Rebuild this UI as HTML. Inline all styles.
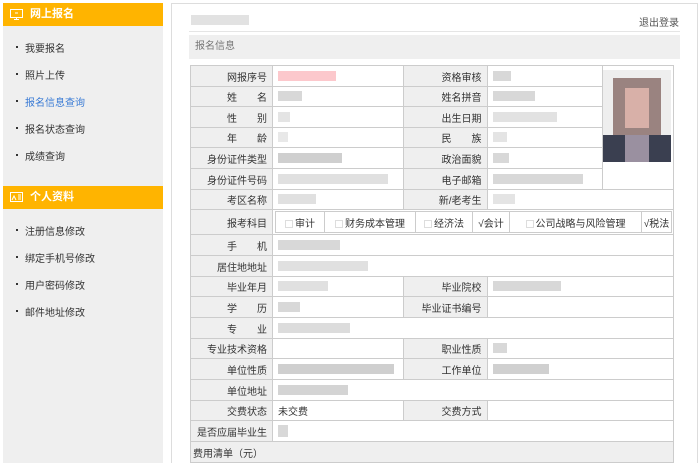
<!DOCTYPE html>
<html style="overflow:hidden;height:463px"><head><meta charset="utf-8"><style>
*{margin:0;padding:0;box-sizing:border-box}
body{width:700px;height:463px;background:#fff;font-family:"Liberation Sans","Noto Sans CJK SC",sans-serif;font-size:10px;color:#333;position:relative;overflow:hidden}
.side{position:absolute;left:3px;top:3px;width:160px;height:460px;background:#efefef}
.hd{position:absolute;left:0;width:160px;height:23px;background:#ffb400;color:#fff;font-size:11px;font-weight:bold;line-height:23px;padding-left:27px}
.hd svg{position:absolute;left:7px;top:6px}
.it{position:absolute;left:22px;font-size:10px;color:#333}
.it:before{content:"";position:absolute;left:-9px;top:6px;width:2px;height:2px;background:#333}
.main{position:absolute;left:171px;top:3px;width:527px;height:460px;border:1px solid #ddd;border-bottom:none}
table{position:absolute;left:190px;top:65px;border-collapse:collapse;table-layout:fixed}
td{border:1px solid #ccc;padding:0 5px;font-size:10px;white-space:nowrap;position:relative;overflow:hidden}
td.l{background:#efefef;text-align:right}
.b{display:inline-block;height:10px;background:#d8d8d8;vertical-align:middle}
.sub{border-collapse:collapse;position:static;table-layout:fixed;width:396px}
.sub td{border:1px solid #ccc;height:21px;padding:0;text-align:center}
.cb{display:inline-block;width:8px;height:8px;border:1px solid #ddd;vertical-align:middle;margin-right:2px}
</style></head><body>
<div class="side">
 <div class="hd" style="top:0"><svg width="13" height="11" viewBox="0 0 13 11" fill="none" stroke="#fff"><rect x="0.5" y="0.5" width="12" height="8"/><path d="M6.5 9v2M4 10.5h5M5 4h3"/></svg>网上报名</div>
 <div class="it" style="top:37px">我要报名</div>
 <div class="it" style="top:64px">照片上传</div>
 <div class="it" style="top:91px;color:#3a7bd5">报名信息查询</div>
 <div class="it" style="top:118px">报名状态查询</div>
 <div class="it" style="top:145px">成绩查询</div>
 <div class="hd" style="top:183px"><svg width="13" height="10" viewBox="0 0 13 10" fill="none" stroke="#fff"><rect x="0.5" y="0.5" width="12" height="9"/><path d="M2 8l2-4 2 4M8 3h3M8 5h3M8 7h3"/></svg>个人资料</div>
 <div class="it" style="top:220px">注册信息修改</div>
 <div class="it" style="top:247px">绑定手机号修改</div>
 <div class="it" style="top:274px">用户密码修改</div>
 <div class="it" style="top:301px">邮件地址修改</div>
</div>
<div class="main"></div>
<div style="position:absolute;left:191px;top:15px;width:58px;height:10px;background:#e2e2e2"></div>
<div style="position:absolute;left:639px;top:14px;font-size:10px;color:#555">退出登录</div>
<div style="position:absolute;left:189px;top:31px;width:491px;height:1px;background:#e5e5e5"></div>
<div style="position:absolute;left:189px;top:35px;width:491px;height:24px;background:#efefef;color:#777;line-height:24px;padding-left:6px">报名信息</div>
<div style="position:absolute;left:603px;top:70px;width:68px;height:92px;background:#eee">
 <div style="position:absolute;left:10px;top:8px;width:48px;height:60px;background:#9a8380"></div>
 <div style="position:absolute;left:22px;top:18px;width:24px;height:40px;background:#d8b0a8"></div>
 <div style="position:absolute;left:0;top:65px;width:68px;height:27px;background:#3a3f50"></div>
 <div style="position:absolute;left:22px;top:65px;width:24px;height:27px;background:#9a90a0"></div>
</div>
<table>
<colgroup><col style="width:82px"><col style="width:131px"><col style="width:83px"><col style="width:115px"><col style="width:71px"></colgroup>
<tr style="height:21px"><td class="l">网报序号</td><td><span class="b" style="width:58px;background:#fcc8cc"></span></td><td class="l">资格审核</td><td><span class="b" style="width:18px"></span></td><td rowspan="6" style="border-bottom:1px solid #ccc"></td></tr>
<tr style="height:20px"><td class="l">姓&emsp;&emsp;名</td><td><span class="b" style="width:24px"></span></td><td class="l">姓名拼音</td><td><span class="b" style="width:42px"></span></td></tr>
<tr style="height:21px"><td class="l">性&emsp;&emsp;别</td><td><span class="b" style="width:12px;background:#e4e4e4"></span></td><td class="l">出生日期</td><td><span class="b" style="width:64px;background:#e2e2e2"></span></td></tr>
<tr style="height:20px"><td class="l">年&emsp;&emsp;龄</td><td><span class="b" style="width:10px;background:#e8e8e8"></span></td><td class="l">民&emsp;&emsp;族</td><td><span class="b" style="width:14px;background:#e4e4e4"></span></td></tr>
<tr style="height:21px"><td class="l">身份证件类型</td><td><span class="b" style="width:64px;background:#cfcfcf"></span></td><td class="l">政治面貌</td><td><span class="b" style="width:16px"></span></td></tr>
<tr style="height:21px"><td class="l">身份证件号码</td><td><span class="b" style="width:110px;background:#e0e0e0"></span></td><td class="l">电子邮箱</td><td colspan="2"><span class="b" style="width:90px"></span></td></tr>
<tr style="height:20px"><td class="l">考区名称</td><td><span class="b" style="width:38px;background:#e0e0e0"></span></td><td class="l">新/老考生</td><td colspan="2"><span class="b" style="width:22px;background:#e4e4e4"></span></td></tr>
<tr style="height:25px"><td class="l">报考科目</td><td colspan="4" style="padding:1px 1px 1px 2px"><table class="sub"><colgroup><col style="width:49px"><col style="width:91px"><col style="width:57px"><col style="width:37px"><col style="width:132px"><col style="width:30px"></colgroup><tr><td><span class="cb"></span>审计</td><td><span class="cb"></span>财务成本管理</td><td><span class="cb"></span>经济法</td><td>√会计</td><td><span class="cb"></span>公司战略与风险管理</td><td>√税法</td></tr></table></td></tr>
<tr style="height:21px"><td class="l">手&emsp;&emsp;机</td><td colspan="4"><span class="b" style="width:62px"></span></td></tr>
<tr style="height:21px"><td class="l">居住地地址</td><td colspan="4"><span class="b" style="width:90px;background:#e0e0e0"></span></td></tr>
<tr style="height:20px"><td class="l">毕业年月</td><td><span class="b" style="width:50px;background:#e0e0e0"></span></td><td class="l">毕业院校</td><td colspan="2"><span class="b" style="width:68px"></span></td></tr>
<tr style="height:21px"><td class="l">学&emsp;&emsp;历</td><td><span class="b" style="width:22px"></span></td><td class="l">毕业证书编号</td><td colspan="2"></td></tr>
<tr style="height:21px"><td class="l">专&emsp;&emsp;业</td><td colspan="4"><span class="b" style="width:72px;background:#dcdcdc"></span></td></tr>
<tr style="height:20px"><td class="l">专业技术资格</td><td></td><td class="l">职业性质</td><td colspan="2"><span class="b" style="width:14px"></span></td></tr>
<tr style="height:21px"><td class="l">单位性质</td><td><span class="b" style="width:116px;background:#cfcfcf"></span></td><td class="l">工作单位</td><td colspan="2"><span class="b" style="width:56px;background:#d0d0d0"></span></td></tr>
<tr style="height:21px"><td class="l">单位地址</td><td colspan="4"><span class="b" style="width:70px;background:#d4d4d4"></span></td></tr>
<tr style="height:20px"><td class="l">交费状态</td><td>未交费</td><td class="l">交费方式</td><td colspan="2"></td></tr>
<tr style="height:21px"><td class="l">是否应届毕业生</td><td colspan="4"><span class="b" style="width:10px;height:12px"></span></td></tr>
<tr style="height:21px"><td class="l" colspan="5" style="text-align:left;padding-left:2px">费用清单（元）</td></tr>
</table>
</body></html>
